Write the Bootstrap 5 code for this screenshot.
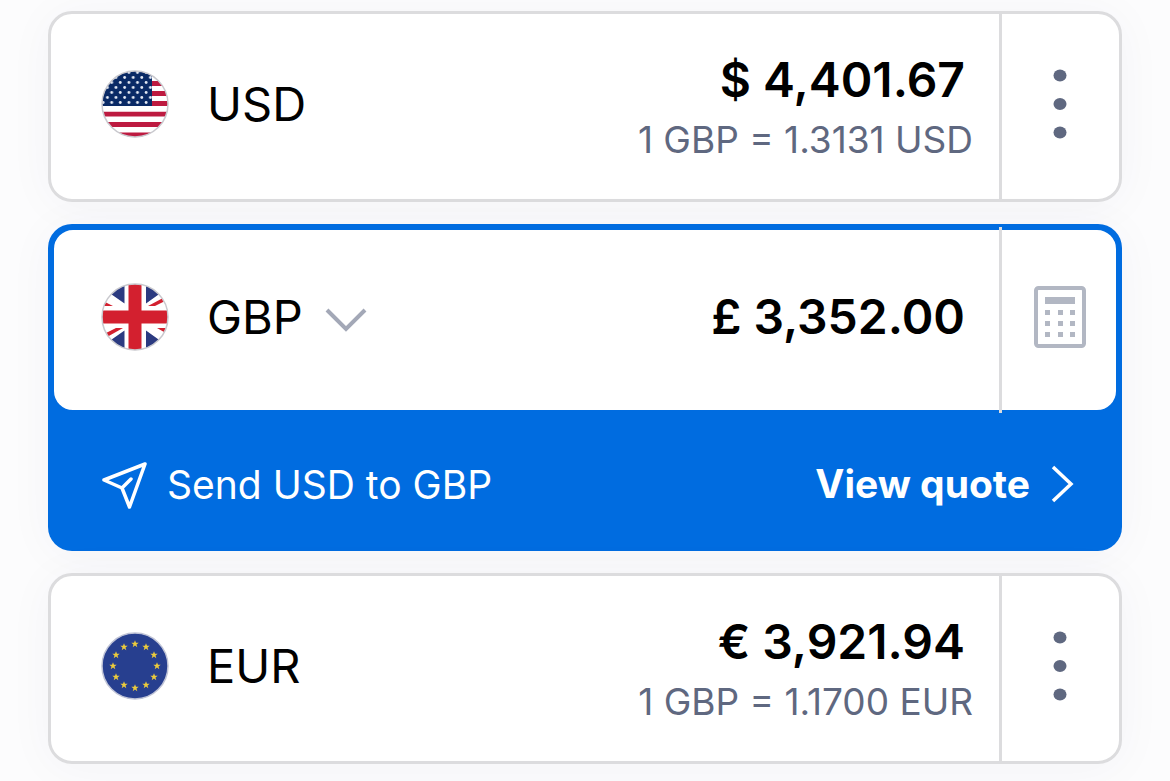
<!DOCTYPE html>
<html lang="en">
<head>
<meta charset="utf-8">
<meta name="viewport" content="width=device-width, initial-scale=1">
<title>Currency converter</title>
<link href="https://cdn.jsdelivr.net/npm/bootstrap@5.3.0/dist/css/bootstrap.min.css" rel="stylesheet">
<style>
  :root { --line: #dcdcde; --brand: #006ce0; --slate: #5f6880; }
  body { background: #fcfcfd; font-family: Inter, "Liberation Sans", sans-serif; color: #000; }
  .converter { padding: 11px 48px 17px; gap: 22px; }
  .money-card { background: #fff; border: 3px solid var(--line); border-radius: 24px; min-height: 191px; box-shadow: 0 4px 48px rgba(40, 40, 90, .04); }
  .money-main { padding: 0 26px 6px 50px; }
  .money-side { width: 120px; border: 0; border-left: 3px solid var(--line); background: transparent; padding: 0 2px 6px 0; }
  .flag { width: 68px; height: 68px; margin-right: 38px; flex: none; }
  .code { font-size: 47px; line-height: 56px; border: 0; background: transparent; padding: 0; color: #000; }
  .code svg { margin: 4px 0 0 22px; }
  .amount { font-size: 48px; line-height: 56px; font-weight: 600; padding-right: 8px; }
  .rate { font-size: 37px; line-height: 44px; color: var(--slate); margin-top: 10px; }
  .stack { padding-top: 6px; }
  .picked { background: var(--brand); border-radius: 24px; padding: 3px; box-shadow: 0 4px 48px rgba(40, 40, 90, .04); }
  .picked .money-card { border-color: var(--brand); border-radius: 22px; min-height: 186px; box-shadow: none; }
  .picked .money-side { width: 117px; margin: -3px 0; padding-right: 0; }
  .picked .money-side svg { margin-left: 2px; }
  .picked .money-main { padding-left: 47px; }
  .quote { padding: 0 45px 0 50px; min-height: 135px; font-size: 39px; line-height: 48px; }
  .quote, .quote a { color: #fff; text-decoration: none; }
  .send-text { font-weight: 400; gap: 18px; padding-top: 8px; }
  .view-link { font-weight: 700; gap: 20px; padding-top: 6px; }
</style>
</head>
<body>
<svg width="0" height="0" class="position-absolute" aria-hidden="true">
  <defs>
    <clipPath id="disc"><circle cx="34" cy="34" r="33"/></clipPath>
    <pattern id="stars" width="8.6" height="10" patternUnits="userSpaceOnUse">
      <rect width="8.6" height="10" fill="#0a2a66"/>
      <circle cx="2.1" cy="2.5" r="1.4" fill="#e6ebf5"/><circle cx="6.4" cy="7.5" r="1.4" fill="#e6ebf5"/>
    </pattern>
    <path id="star" d="M0-3.8L1-1.200 3.700-1.200 1.500.5 2.300 3.200 0 1.600-2.300 3.200-1.500.5-3.700-1.200-1-1.200Z"/>
  </defs>
</svg>
<main class="container-fluid converter d-flex flex-column">

  <section class="money-card d-flex">
    <div class="money-main flex-grow-1 d-flex align-items-center">
      <svg class="flag" viewBox="0 0 68 68" role="img" aria-label="United States">
        <g clip-path="url(#disc)">
          <rect width="68" height="68" fill="#fff"/>
          <path d="M0 3.500h68M0 13.500h68M0 23.500h68M0 33.500h68M0 44h68M0 54.500h68M0 65h68" stroke="#bd1a40" stroke-width="5"/>
          <rect width="51" height="36" fill="url(#stars)"/>
          <rect y="36" width="68" height="5.500" fill="#fff"/>
        </g>
        <circle cx="34" cy="34" r="33" fill="none" stroke="#c9c9ce" stroke-width="1.500"/>
      </svg>
      <span class="code">USD</span>
      <div class="stack ms-auto text-end">
        <div class="amount">$ 4,401.67</div>
        <div class="rate">1 GBP = 1.3131 USD</div>
      </div>
    </div>
    <button class="money-side" type="button" aria-label="USD options">
      <svg width="14" height="70" viewBox="0 0 14 70" fill="#5f6880"><ellipse cx="7" cy="6.500" rx="6.500" ry="6"/><ellipse cx="7" cy="35" rx="6.500" ry="6"/><ellipse cx="7" cy="63.500" rx="6.500" ry="6"/></svg>
    </button>
  </section>

  <section class="picked">
    <div class="money-card d-flex">
      <div class="money-main flex-grow-1 d-flex align-items-center">
        <svg class="flag" viewBox="0 0 68 68" role="img" aria-label="United Kingdom">
          <g clip-path="url(#disc)">
            <rect width="68" height="68" fill="#fff"/>
            <path d="M23.500 0V20.500L0 4V0ZM45 0V20.500L68 4V0ZM23.500 68V47.500L0 64V68ZM45 68V47.500L68 64V68Z" fill="#2b3a80"/>
            <path d="M0 18L5 19.500 12 23H0ZM47 23H54L66 17 62 15ZM15 45H22L6 54 3 51ZM56 45H68V51L63 49Z" fill="#d3202f"/>
            <path d="M34 0v68M0 34h68" stroke="#d3202f" stroke-width="13"/>
          </g>
          <circle cx="34" cy="34" r="33" fill="none" stroke="#c9c9ce" stroke-width="1.500"/>
        </svg>
        <button class="code d-flex align-items-center" type="button">GBP
          <svg width="42" height="26" viewBox="0 0 42 26" fill="none" stroke="#a3a8b7" stroke-width="4"><path d="M2 4L21 23 40 4"/></svg>
        </button>
        <div class="amount ms-auto">£ 3,352.00</div>
      </div>
      <button class="money-side" type="button" aria-label="Calculator">
        <svg width="52" height="62" viewBox="0 0 52 62" fill="#b2b7c3">
          <rect x="2" y="2" width="48" height="58" rx="2.500" fill="none" stroke="#b2b7c3" stroke-width="4"/>
          <path d="M11 11h30v7H11zM11 24h5v5h-5zM24 24h5v5h-5zM36 24h5v5h-5zM11 35h5v5h-5zM24 35h5v5h-5zM36 35h5v5h-5zM11 46h5v5h-5zM24 46h5v5h-5zM36 46h5v5h-5z"/>
        </svg>
      </button>
    </div>
    <div class="quote d-flex align-items-center justify-content-between">
      <div class="send-text d-flex align-items-center">
        <svg width="48" height="48" viewBox="0 0 48 48" fill="none" stroke="#fff" stroke-width="3.500" stroke-linejoin="round" stroke-linecap="round"><path d="M44 3L3 19 21 27 28.500 46ZM21 27L30 18"/></svg>
        <span>Send USD to GBP</span>
      </div>
      <a class="view-link d-flex align-items-center" href="#">View quote
        <svg width="24" height="38" viewBox="0 0 24 38" fill="none" stroke="#fff" stroke-width="3.500"><path d="M3 2L21 19 3 36"/></svg>
      </a>
    </div>
  </section>

  <section class="money-card d-flex">
    <div class="money-main flex-grow-1 d-flex align-items-center">
      <svg class="flag" viewBox="0 0 68 68" role="img" aria-label="European Union">
        <circle cx="34" cy="34" r="33" fill="#273f8f" stroke="#bfc3d6" stroke-width="1.500"/>
        <g fill="#eccb3c">
          <use href="#star" x="34" y="12"/><use href="#star" x="45" y="15"/><use href="#star" x="53" y="23"/><use href="#star" x="56" y="34"/>
          <use href="#star" x="53" y="45"/><use href="#star" x="45" y="53"/><use href="#star" x="34" y="56"/><use href="#star" x="23" y="53"/>
          <use href="#star" x="15" y="45"/><use href="#star" x="12" y="34"/><use href="#star" x="15" y="23"/><use href="#star" x="23" y="15"/>
        </g>
      </svg>
      <span class="code">EUR</span>
      <div class="stack ms-auto text-end">
        <div class="amount">€ 3,921.94</div>
        <div class="rate">1 GBP = 1.1700 EUR</div>
      </div>
    </div>
    <button class="money-side" type="button" aria-label="EUR options">
      <svg width="14" height="70" viewBox="0 0 14 70" fill="#5f6880"><ellipse cx="7" cy="6.500" rx="6.500" ry="6"/><ellipse cx="7" cy="35" rx="6.500" ry="6"/><ellipse cx="7" cy="63.500" rx="6.500" ry="6"/></svg>
    </button>
  </section>
</main>
<script src="https://cdn.jsdelivr.net/npm/bootstrap@5.3.0/dist/js/bootstrap.bundle.min.js"></script>
</body>
</html>
